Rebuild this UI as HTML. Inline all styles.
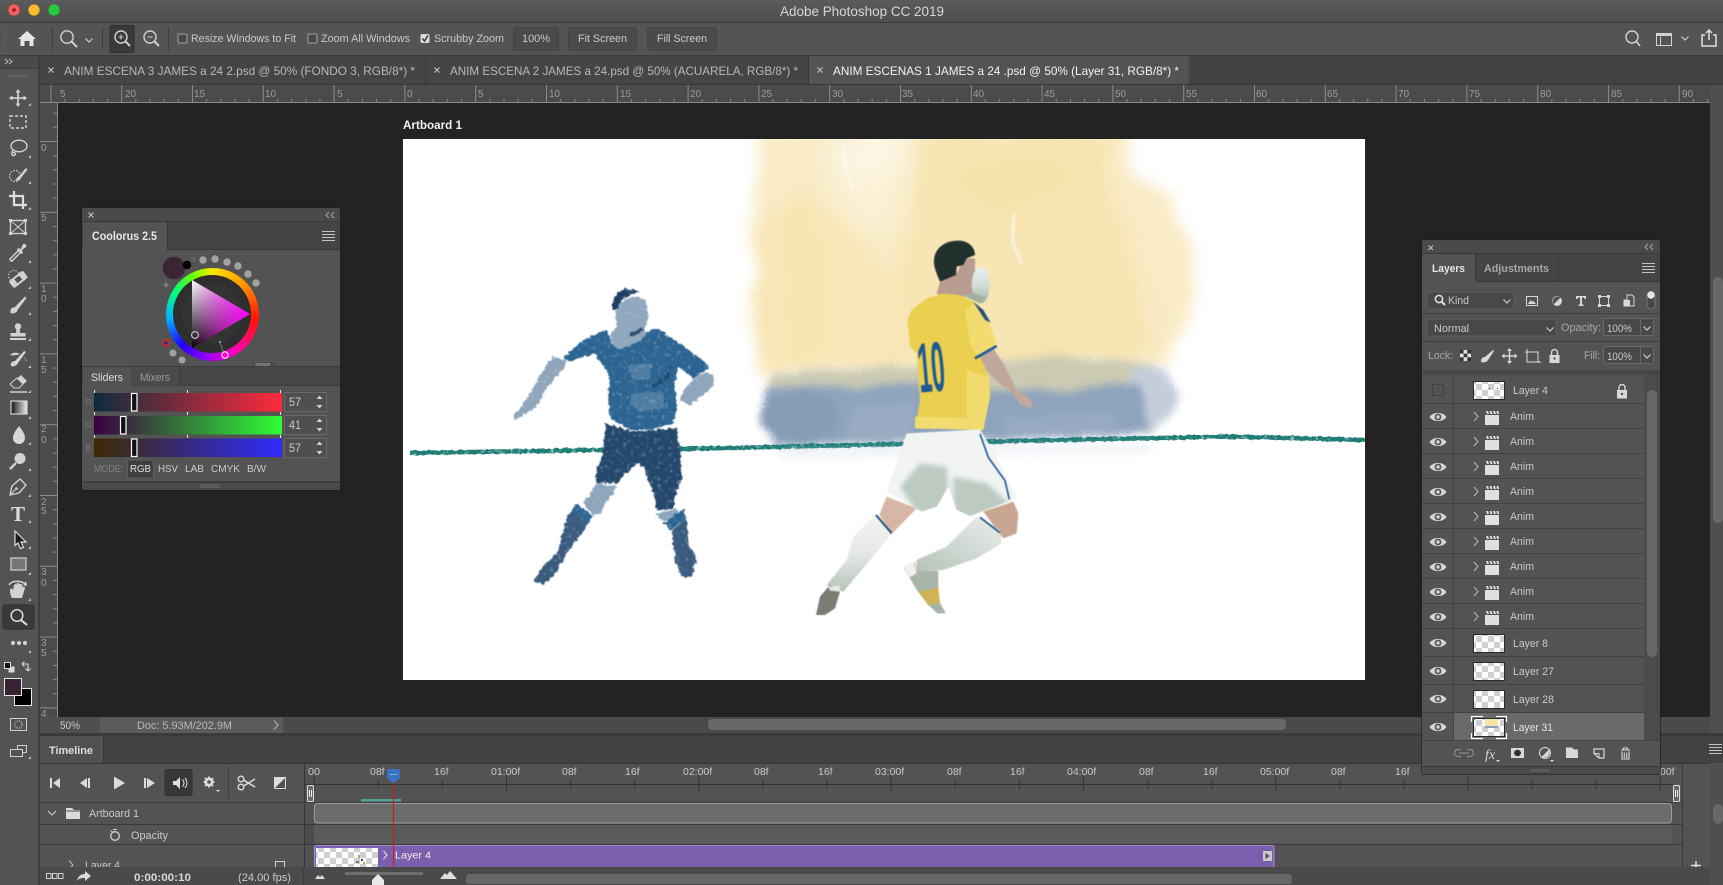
<!DOCTYPE html>
<html><head><meta charset="utf-8"><title>Adobe Photoshop CC 2019</title>
<style>
html,body{margin:0;padding:0;background:#535353;overflow:hidden;width:1723px;height:885px}
svg{display:block;font-family:"Liberation Sans",sans-serif;font-size:11px}
text{fill:#c9c9c9}
.ic{fill:none;stroke:#d2d2d2;stroke-width:1.4}
.f{fill:#d2d2d2;stroke:none}
.ln{stroke:#3d3d3d;stroke-width:1;fill:none}
filter{color-interpolation-filters:sRGB}
</style></head><body>
<svg width="1723" height="885" viewBox="0 0 1723 885" xmlns="http://www.w3.org/2000/svg">
<defs>
<pattern id="chk" patternUnits="userSpaceOnUse" width="12" height="12"><rect width="12" height="12" fill="#fff"/><rect width="6" height="6" fill="#cfcfcf"/><rect x="6" y="6" width="6" height="6" fill="#cfcfcf"/></pattern>
<pattern id="hr" patternUnits="userSpaceOnUse" x="404.4" y="85" width="70.8" height="18"><path d="M.5 0V18M14.66 14V18M28.82 14V18M42.98 14V18M57.14 14V18" stroke="#8a8a8a" stroke-width="1"/></pattern>
<pattern id="vr" patternUnits="userSpaceOnUse" x="40" y="141" width="18" height="70.8"><path d="M0 .5H18M13 14.66H18M13 28.82H18M13 42.98H18M13 57.14H18" stroke="#8a8a8a" stroke-width="1"/></pattern>
<pattern id="tl" patternUnits="userSpaceOnUse" x="313.7" y="777" width="192.3" height="14"><path d="M.5 0V14M64.6 3V12M128.7 3V12" stroke="#333" stroke-width="1"/></pattern>
<linearGradient id="tb" x1="0" y1="0" x2="0" y2="1"><stop offset="0" stop-color="#5b5b5b"/><stop offset="1" stop-color="#4f4f4f"/></linearGradient>
<linearGradient id="gr" x1="0" y1="0" x2="1" y2="0"><stop offset="0" stop-color="#0c2c3d"/><stop offset="1" stop-color="#ff2a3d"/></linearGradient>
<linearGradient id="gg" x1="0" y1="0" x2="1" y2="0"><stop offset="0" stop-color="#3a0040"/><stop offset="1" stop-color="#2eff35"/></linearGradient>
<linearGradient id="gb" x1="0" y1="0" x2="1" y2="0"><stop offset="0" stop-color="#3d2a00"/><stop offset="1" stop-color="#2f2aff"/></linearGradient>
<linearGradient id="tw" gradientUnits="userSpaceOnUse" x1="0" y1="280" x2="0" y2="348"><stop offset="0" stop-color="#fff"/><stop offset="1" stop-color="#000"/></linearGradient>
<linearGradient id="tm" gradientUnits="userSpaceOnUse" x1="250" y1="0" x2="192" y2="0"><stop offset="0" stop-color="#ff00ff"/><stop offset="1" stop-color="#ff00ff" stop-opacity="0"/></linearGradient>
<linearGradient id="tg" x1="0" y1="0" x2="1" y2="0"><stop offset="0" stop-color="#111"/><stop offset="1" stop-color="#eee"/></linearGradient>
<linearGradient id="ballg" x1="0" y1="0" x2="0" y2="1"><stop offset="0" stop-color="#e8f1ef"/><stop offset=".55" stop-color="#cfdad5"/><stop offset="1" stop-color="#9fb0a0"/></linearGradient>
<linearGradient id="sockg" x1="0" y1="0" x2="0" y2="1"><stop offset="0" stop-color="#f3f4f2"/><stop offset=".5" stop-color="#e6e9e6"/><stop offset="1" stop-color="#b5c3ba"/></linearGradient>
<linearGradient id="sock2" x1="1" y1="0" x2="0" y2="1"><stop offset="0" stop-color="#eceeec"/><stop offset="1" stop-color="#b5c3ba"/></linearGradient>
<filter id="wc" filterUnits="userSpaceOnUse" x="403" y="100" width="962" height="480" color-interpolation-filters="sRGB"><feTurbulence type="fractalNoise" baseFrequency=".02" numOctaves="4" seed="4" result="a"/><feDisplacementMap in="SourceGraphic" in2="a" scale="24" xChannelSelector="R" yChannelSelector="G" result="b"/><feGaussianBlur in="b" stdDeviation="7" result="c"/><feTurbulence type="fractalNoise" baseFrequency=".3" numOctaves="2" seed="2" result="d"/><feDisplacementMap in="c" in2="d" scale="6" xChannelSelector="R" yChannelSelector="G"/></filter>
<filter id="wp" filterUnits="userSpaceOnUse" x="403" y="100" width="962" height="480" color-interpolation-filters="sRGB"><feTurbulence type="fractalNoise" baseFrequency=".018" numOctaves="3" seed="11" result="a"/><feDisplacementMap in="SourceGraphic" in2="a" scale="40" xChannelSelector="R" yChannelSelector="G" result="b"/><feGaussianBlur in="b" stdDeviation="14"/></filter>
<filter id="wb" filterUnits="userSpaceOnUse" x="403" y="300" width="962" height="240" color-interpolation-filters="sRGB"><feTurbulence type="fractalNoise" baseFrequency=".03" numOctaves="4" seed="9" result="a"/><feDisplacementMap in="SourceGraphic" in2="a" scale="10" xChannelSelector="R" yChannelSelector="G" result="b"/><feGaussianBlur in="b" stdDeviation="4" result="c"/><feTurbulence type="fractalNoise" baseFrequency=".35" numOctaves="2" seed="6" result="d"/><feDisplacementMap in="c" in2="d" scale="5" xChannelSelector="R" yChannelSelector="G"/></filter>
<filter id="rough" filterUnits="userSpaceOnUse" x="480" y="260" width="260" height="340" color-interpolation-filters="sRGB"><feTurbulence type="fractalNoise" baseFrequency=".26" numOctaves="2" seed="3" result="n"/><feDisplacementMap in="SourceGraphic" in2="n" scale="5" xChannelSelector="R" yChannelSelector="G" result="d"/><feGaussianBlur in="d" stdDeviation=".5" result="d2"/><feColorMatrix in="n" type="matrix" values="0 0 0 0 .75 0 0 0 0 .82 0 0 0 0 .88 0 0 0 1.6 -.92" result="sp"/><feGaussianBlur in="sp" stdDeviation=".4" result="sp2"/><feComposite in="sp2" in2="d2" operator="in" result="s2"/><feMerge><feMergeNode in="d2"/><feMergeNode in="s2"/></feMerge></filter>
<filter id="ln" filterUnits="userSpaceOnUse" x="403" y="420" width="962" height="50" color-interpolation-filters="sRGB"><feTurbulence type="fractalNoise" baseFrequency=".22" numOctaves="2" seed="5" result="n"/><feDisplacementMap in="SourceGraphic" in2="n" scale="3" xChannelSelector="R" yChannelSelector="G" result="d"/><feColorMatrix in="n" type="matrix" values="0 0 0 0 1 0 0 0 0 1 0 0 0 0 1 0 0 0 2 -1.15" result="sp"/><feComposite in="sp" in2="d" operator="in" result="s2"/><feMerge><feMergeNode in="d"/><feMergeNode in="s2"/></feMerge></filter>
<filter id="soft" filterUnits="userSpaceOnUse" x="800" y="230" width="300" height="400" color-interpolation-filters="sRGB"><feGaussianBlur stdDeviation=".45"/></filter>
<filter id="sh" x="-25%" y="-25%" width="150%" height="150%"><feGaussianBlur stdDeviation="7"/></filter>
<filter id="sk" x="-80%" y="-20%" width="260%" height="140%"><feGaussianBlur stdDeviation="4"/></filter>
<filter id="bl6" filterUnits="userSpaceOnUse" x="403" y="400" width="962" height="120"><feGaussianBlur stdDeviation="4"/></filter>
<clipPath id="ab"><rect x="403" y="139" width="962" height="541"/></clipPath>
<clipPath id="tlc"><rect x="40" y="845" width="1670" height="22"/></clipPath>
<clipPath id="shortsc"><path d="M320 610L540 598L590 680L650 805L510 858L470 840L445 770L410 830L365 845L260 785Z"/></clipPath>
<g id="eye"><path d="M-8.5 0C-5 -5.5 5 -5.5 8.5 0C5 5.5 -5 5.5 -8.5 0Z" fill="#d4d4d4"/><circle r="3.4" fill="#535353"/><circle r="1.7" fill="#d4d4d4"/></g>
<g id="clap"><path d="M0 4H14V14H0Z" fill="#e0e0e0"/><path d="M1 0h2l1 3H2ZM4.5 0h2l1 3h-2ZM8 0h2l1 3H9ZM11.5 0h2l.5 3h-2Z" fill="#e0e0e0"/></g>
<g id="chev"><path d="M-2 -4.5L2 0L-2 4.5" fill="none" stroke="#b4b4b4" stroke-width="1.1"/></g>
<g id="ham"><path d="M0 .5H13M0 3.5H13M0 6.5H13M0 9.5H13" stroke="#c4c4c4" stroke-width="1"/></g>
<g id="tri"><path d="M3 0V3H0Z" fill="#bdbdbd"/></g>
<g id="dn"><path d="M-3.5 -1.5L0 2L3.5 -1.5" fill="none" stroke="#cfcfcf" stroke-width="1.2"/></g>
<g id="updn"><path d="M-3 -3L0 -6.5L3 -3ZM-3 3L0 6.5L3 3Z" fill="#d0d0d0"/></g>
</defs>

<!-- base -->
<rect width="1723" height="885" fill="#535353"/>
<rect width="1723" height="22" fill="url(#tb)"/>
<rect y="22" width="1723" height="1" fill="#383838"/>
<circle cx="14" cy="10" r="5.6" fill="#fc5b57"/><circle cx="14" cy="10" r="1.8" fill="#8a1d1a"/>
<circle cx="34" cy="10" r="5.6" fill="#fdbc2e"/><circle cx="54" cy="10" r="5.6" fill="#28c840"/>
<text x="780" y="16" font-size="13.5" textLength="164" lengthAdjust="spacingAndGlyphs" style="fill:#d6d6d6">Adobe Photoshop CC 2019</text>

<!-- options bar -->
<rect y="23" width="1723" height="32" fill="#545454"/><rect y="55" width="1723" height="1" fill="#3c3c3c"/>
<path d="M5 29V50" stroke="#6a6a6a" stroke-dasharray="1 1.5" stroke-width="3" opacity=".6"/>
<path d="M27 31L36 39H33.5V46H29.5V41H24.5V46H20.5V39H18Z" fill="#e6e6e6"/>
<path class="ln" d="M52.5 27V50M102.5 27V50M168.5 27V50"/>
<g transform="translate(68,38)"><circle cx="-1" cy="-1" r="6.2" class="ic"/><path d="M3.5 3.5L9 9" stroke="#d2d2d2" stroke-width="2"/></g>
<use href="#dn" x="89" y="40"/>
<rect x="110" y="25.5" width="24" height="27" rx="2" fill="#3a3a3a" stroke="#2e2e2e"/>
<g transform="translate(122,38)"><circle cx="-1" cy="-1" r="6" class="ic"/><path d="M3.5 3.5L8 8" stroke="#d2d2d2" stroke-width="2"/><path d="M-3.5 -1H1.5M-1 -3.5V1.5" stroke="#d2d2d2"/></g>
<g transform="translate(151,38)"><circle cx="-1" cy="-1" r="6" class="ic"/><path d="M3.5 3.5L8 8" stroke="#d2d2d2" stroke-width="2"/><path d="M-3.5 -1H1.5" stroke="#d2d2d2"/></g>
<rect x="178" y="34" width="9" height="9" rx="1.5" fill="#484848" stroke="#a2a2a2"/>
<text x="191" y="42" textLength="105" lengthAdjust="spacingAndGlyphs">Resize Windows to Fit</text>
<rect x="308" y="34" width="9" height="9" rx="1.5" fill="#484848" stroke="#a2a2a2"/>
<text x="321" y="42" textLength="89" lengthAdjust="spacingAndGlyphs">Zoom All Windows</text>
<rect x="420.5" y="34" width="9" height="9" rx="1.5" fill="#d8d8d8"/><path d="M422.5 38.5L424.5 41L428 35.5" fill="none" stroke="#333" stroke-width="1.4"/>
<text x="434" y="42" textLength="70" lengthAdjust="spacingAndGlyphs">Scrubby Zoom</text>
<rect x="513.5" y="27.5" width="45" height="23" rx="2" fill="#4a4a4a" stroke="#444"/>
<text x="522" y="42" textLength="28" lengthAdjust="spacingAndGlyphs">100%</text>
<rect x="568.5" y="27.5" width="68" height="23" rx="2" fill="#4a4a4a" stroke="#444"/>
<text x="578" y="42" textLength="49" lengthAdjust="spacingAndGlyphs">Fit Screen</text>
<rect x="647.5" y="27.5" width="69" height="23" rx="2" fill="#4a4a4a" stroke="#444"/>
<text x="657" y="42" textLength="50" lengthAdjust="spacingAndGlyphs">Fill Screen</text>
<g transform="translate(1633,38)"><circle cx="-1" cy="-1" r="6" class="ic" stroke-width="1.5"/><path d="M3.5 3.5L7 8" stroke="#d2d2d2" stroke-width="1.6"/></g>
<rect x="1656.5" y="33.5" width="15" height="12" class="ic" style="stroke-width:1"/><rect x="1656.5" y="33.5" width="15" height="2.5" fill="#d2d2d2"/><path d="M1660.5 37V45" stroke="#d2d2d2"/>
<use href="#dn" x="1685" y="38"/>
<path d="M1709 30V40M1706 33L1709 30L1712 33M1705 35H1702V46H1716V35H1713" fill="none" stroke="#e0e0e0" stroke-width="1.5"/>

<!-- tabs -->
<rect x="38" y="56" width="1685" height="28" fill="#424242"/>
<rect x="38" y="56" width="387" height="28" fill="#454545"/><rect x="425" y="56" width="1" height="28" fill="#383838"/>
<rect x="426" y="56" width="382" height="28" fill="#454545"/><rect x="808" y="56" width="1" height="28" fill="#383838"/>
<rect x="809" y="56" width="380" height="28" fill="#535353"/>
<rect x="38" y="84" width="1685" height="1" fill="#383838"/>
<path d="M48.5 67.5L53.5 72.5M53.5 67.5L48.5 72.5M434.5 67.5L439.5 72.5M439.5 67.5L434.5 72.5M817.5 67.5L822.5 72.5M822.5 67.5L817.5 72.5" stroke="#c6c6c6" stroke-width="1.1"/>
<text x="64" y="75" font-size="12" textLength="351" lengthAdjust="spacingAndGlyphs" style="fill:#b8b8b8">ANIM ESCENA 3 JAMES a 24 2.psd @ 50% (FONDO 3, RGB/8*) *</text>
<text x="450" y="75" font-size="12" textLength="348" lengthAdjust="spacingAndGlyphs" style="fill:#b8b8b8">ANIM ESCENA 2 JAMES a 24.psd @ 50% (ACUARELA, RGB/8*) *</text>
<text x="833" y="75" font-size="12" textLength="346" lengthAdjust="spacingAndGlyphs" style="fill:#f2f2f2">ANIM ESCENAS 1 JAMES a 24 .psd @ 50% (Layer 31, RGB/8*) *</text>

<!-- canvas -->
<rect x="58" y="103" width="1652" height="614" fill="#232323"/>
<rect x="1710" y="85" width="13" height="649" fill="#4f4f4f"/>
<rect x="1713" y="277" width="10" height="246" rx="5" fill="#686868"/>

<!-- rulers -->
<rect x="40" y="85" width="1670" height="18" fill="#4b4b4b"/>
<rect x="40" y="85" width="1670" height="18" fill="url(#hr)"/>
<rect x="40" y="103" width="18" height="614" fill="#4b4b4b"/>
<rect x="40" y="103" width="18" height="614" fill="url(#vr)"/>
<rect x="40" y="102" width="1670" height="1" fill="#8a8a8a"/><rect x="57" y="103" width="1" height="614" fill="#8a8a8a"/>
<g font-size="10" style="fill:#9c9c9c">
<text x="60" y="97" style="fill:#9c9c9c">5</text><text x="125" y="97" style="fill:#9c9c9c">20</text><text x="194" y="97" style="fill:#9c9c9c">15</text><text x="265" y="97" style="fill:#9c9c9c">10</text><text x="337" y="97" style="fill:#9c9c9c">5</text><text x="407" y="97" style="fill:#9c9c9c">0</text><text x="478" y="97" style="fill:#9c9c9c">5</text><text x="549" y="97" style="fill:#9c9c9c">10</text><text x="620" y="97" style="fill:#9c9c9c">15</text><text x="690" y="97" style="fill:#9c9c9c">20</text><text x="761" y="97" style="fill:#9c9c9c">25</text><text x="832" y="97" style="fill:#9c9c9c">30</text><text x="902" y="97" style="fill:#9c9c9c">35</text><text x="973" y="97" style="fill:#9c9c9c">40</text><text x="1044" y="97" style="fill:#9c9c9c">45</text><text x="1115" y="97" style="fill:#9c9c9c">50</text><text x="1186" y="97" style="fill:#9c9c9c">55</text><text x="1256" y="97" style="fill:#9c9c9c">60</text><text x="1327" y="97" style="fill:#9c9c9c">65</text><text x="1398" y="97" style="fill:#9c9c9c">70</text><text x="1469" y="97" style="fill:#9c9c9c">75</text><text x="1540" y="97" style="fill:#9c9c9c">80</text><text x="1611" y="97" style="fill:#9c9c9c">85</text><text x="1682" y="97" style="fill:#9c9c9c">90</text>
<text x="41" y="151" style="fill:#9c9c9c">0</text><text x="41" y="221" style="fill:#9c9c9c">5</text><text x="41" y="292" style="fill:#9c9c9c">1</text><text x="41" y="302" style="fill:#9c9c9c">0</text><text x="41" y="363" style="fill:#9c9c9c">1</text><text x="41" y="373" style="fill:#9c9c9c">5</text><text x="41" y="432" style="fill:#9c9c9c">2</text><text x="41" y="443" style="fill:#9c9c9c">0</text><text x="41" y="505" style="fill:#9c9c9c">2</text><text x="41" y="514" style="fill:#9c9c9c">5</text><text x="41" y="575" style="fill:#9c9c9c">3</text><text x="41" y="586" style="fill:#9c9c9c">0</text><text x="41" y="646" style="fill:#9c9c9c">3</text><text x="41" y="656" style="fill:#9c9c9c">5</text><text x="41" y="717" style="fill:#9c9c9c">4</text>
</g>

<!-- artboard -->
<text x="403" y="129" font-size="11.5" font-weight="bold" textLength="59" lengthAdjust="spacingAndGlyphs" style="fill:#f0f0f0">Artboard 1</text>
<rect x="403" y="139" width="962" height="541" fill="#fff"/>
<g clip-path="url(#ab)">
 <g filter="url(#wc)">
  <g transform="translate(730,135) scale(.33333)">
   <path d="M90 -20L1200 -20L1210 140L1335 175L1390 350L1385 500L1300 690L110 720L62 500L80 180Z" fill="#f9ebc6"/>
   <path d="M560 -20L1140 -20L1150 200L1220 300L1250 640L1000 690L500 700L520 300L560 140Z" fill="#f7e6b4"/>
   <path d="M85 300L240 180L400 340L530 420L520 700L110 710L62 500Z" fill="#f8e6b6"/>
   <path d="M170 180L250 170L260 640L190 660Z" fill="#f6e2a8" opacity=".6"/>
  </g>
 </g>
 <g filter="url(#wp)">
  <g transform="translate(730,135) scale(.33333)">
   <path d="M620 30L1080 30L1090 190L950 250L820 290L640 200Z" fill="#f5dfa0" opacity=".4"/>
   <path d="M900 420L1220 440L1240 640L820 660Z" fill="#f5e0a4" opacity=".35"/>
   <path d="M300 60L520 40L510 280L380 300Z" fill="#fdf6e4" opacity=".55"/>
   <path d="M280 -10L540 -10L520 90L300 100Z" fill="#fff" opacity=".55"/>
  </g>
 </g>
 <g transform="translate(730,135) scale(.33333)" filter="url(#sk)">
  <path d="M340 30L345 100L370 160" fill="none" stroke="#fff" stroke-width="8" opacity=".55"/>
  <path d="M852 235L848 320L875 385" fill="none" stroke="#fff" stroke-width="8" opacity=".7"/>
 </g>
 <g filter="url(#wb)">
  <g transform="translate(730,135) scale(.33333)">
   <path d="M120 712L560 695L1000 665L1270 685L1330 760L1335 810L1270 890L1100 900L140 925L100 800Z" fill="#cbcab3"/>
   <path d="M1210 690L1300 700L1340 780L1320 850L1260 890L1180 880Z" fill="#c4cedb"/>
   <path d="M105 760L560 750L1000 770L1230 745L1262 890L1100 905L140 935L100 800Z" fill="#8ea3bd"/>
   <ellipse cx="210" cy="845" rx="120" ry="75" fill="#869cb7"/>
   <path d="M380 810L560 800L540 920L340 925Z" fill="#98abc2"/>
   <path d="M830 845L1150 825L1180 895L820 905Z" fill="#97aac2"/>
  </g>
 </g>
 <path d="M410 453C600 451 660 449 730 448L1060 440L1230 436.500L1365 440" fill="none" stroke="#1f7d76" stroke-width="4.500" filter="url(#ln)"/>
 <path d="M780 455L1150 448" stroke="#dfe7ee" stroke-width="8" opacity=".5" filter="url(#bl6)" fill="none"/>

 <!-- blue player -->
 <g filter="url(#rough)"><g transform="translate(500,270) scale(.33333)">
  <path d="M125 310L155 260L200 270L195 290L135 360L110 410L45 450L40 438L85 380Z" fill="#8ea5bc"/>
  <path d="M590 320L625 305L645 325L630 360L570 405L540 395L550 360Z" fill="#8ea5bc"/>
  <path d="M190 265L250 210L320 180L335 220L360 238L430 190L470 175L540 220L620 280L625 295L580 325L535 290L525 340L530 420L520 460L450 480L390 480L330 445L325 380L330 320L285 250L210 275Z" fill="#2c6492"/>
  <path d="M385 285L455 280L450 325L395 330ZM395 370L490 365L495 415L420 425L390 405Z" fill="#6f95b5" opacity=".5"/>
  <path d="M345 130C350 90 400 70 435 90C450 120 445 160 430 180L440 195L400 225L360 238L335 220L330 195L350 170Z" fill="#90a7bd"/>
  <path d="M385 195L420 175L430 180L400 200Z" fill="#2b4a6a"/>
  <path d="M336 118C335 85 355 60 380 55L420 65L390 75L365 90L350 118Z" fill="#1d3f63"/>
  <path d="M450 348L500 315L515 285L512 318L470 352Z" fill="#1d4a70"/>
  <path d="M290 640L350 650L300 730L280 735L250 700Z" fill="#8ea5bc"/>
  <path d="M315 460L400 485L530 475L540 530L545 620L525 680L520 715L470 720L460 670L430 590L410 580L350 640L290 640L285 620L310 540Z" fill="#24476b"/>
  <path d="M205 730L230 705L275 735L260 770L200 850L160 920L130 945L100 930L130 890L170 850Z" fill="#3a5b7e"/>
  <path d="M215 720L235 705L275 735L265 760Z" fill="#2c6492"/>
  <path d="M468 732L530 715L535 735L490 755Z" fill="#8ea5bc"/>
  <path d="M515 780L560 745L565 820L590 870L575 920L545 920L525 870Z" fill="#3a5b7e"/>
  <path d="M490 760L550 715L560 745L510 780Z" fill="#2c6492"/>
 </g></g>

 <!-- yellow player -->
 <g filter="url(#soft)"><g transform="translate(800,230) scale(.33333)">
  <path d="M535 375L580 355L610 400L650 480L695 510L695 535L660 525L640 490L590 455L560 420Z" fill="#c2a89c"/>
  <path d="M420 155L470 130L480 110L495 85L525 85L525 195L485 200L410 192Z" fill="#b89c90"/>
  <path d="M402 90C405 50 440 30 480 32C510 35 525 55 525 75L500 85L490 105L470 110L468 135L420 155C410 130 400 110 402 90Z" fill="#22302e"/>
  <ellipse cx="542" cy="165" rx="27" ry="55" fill="url(#ballg)"/>
  <path d="M485 195L520 190L560 205L530 215Z" fill="#a0b09e"/>
  <path d="M335 240L380 205L430 190L480 195L520 215L565 275L590 345L535 370L565 440L570 500L550 600L345 595L360 510L350 370L330 350L322 270Z" fill="#ebcf4e"/>
  <path d="M495 240L520 220L565 270L590 345L530 375L510 340ZM500 420L568 440L570 500L550 600L500 598ZM345 560L550 565L550 600L345 595Z" fill="#f3dc6f"/>
  <path d="M520 215L550 240L572 278L555 270Z" fill="#2a4f78"/>
  <path d="M525 385L590 348" stroke="#1c5a96" stroke-width="8" fill="none"/>
  <text transform="translate(360,488) rotate(-5) scale(.34,1)" font-size="212" font-weight="bold" style="fill:#1f5a96">10</text>
  <path d="M320 610L540 598L590 680L650 805L510 858L470 840L445 770L410 830L365 845L260 785Z" fill="#f2f4f2"/>
  <g clip-path="url(#shortsc)"><path d="M300 770L360 700L440 710L445 770L420 860L360 860ZM460 740L560 760L640 830L510 880L460 850Z" fill="#bccac2" filter="url(#sh)"/></g>
  <path d="M540 612L565 682L615 752L628 808" fill="none" stroke="#1f5a96" stroke-width="5"/>
  <path d="M260 800L350 835L275 912L238 855Z" fill="#d8b6a6"/>
  <path d="M225 855L275 910L215 985L130 1085L80 1065L140 990L160 920Z" fill="url(#sockg)"/>
  <path d="M228 855L275 910" stroke="#1c4f86" stroke-width="6" fill="none"/>
  <path d="M90 1065L120 1085L105 1135L75 1155L48 1155L60 1100Z" fill="#7a7d72"/>
  <path d="M85 1070L120 1066L118 1085L90 1082Z" fill="#e8e8e4"/>
  <path d="M550 845L640 815L655 850L650 910L610 925Z" fill="#c9a691"/>
  <path d="M350 990L440 950L530 860L600 900L605 940L530 985L430 1020L350 1022Z" fill="url(#sock2)"/>
  <path d="M540 862L600 908" stroke="#1c4f86" stroke-width="5" fill="none"/>
  <path d="M310 1012L345 996L350 1022L415 1022L415 1075L355 1088Z" fill="#a9b5a9"/>
  <path d="M312 1012L342 998L350 1030L328 1042Z" fill="#f1f1ef"/>
  <path d="M355 1086L415 1072L420 1118L385 1126Z" fill="#d0b354"/>
  <path d="M385 1125L420 1118L437 1150L412 1150Z" fill="#a5b3a8"/>
 </g></g>
</g>

<!-- left toolbar -->
<rect x="0" y="56" width="38" height="829" fill="#535353"/>
<rect x="38" y="56" width="2" height="829" fill="#3d3d3d"/>
<rect x="0" y="56" width="38" height="12" fill="#4a4a4a"/><rect x="0" y="68" width="38" height="1" fill="#404040"/>
<path d="M5 59L8 61.5L5 64M9 59L12 61.5L9 64" fill="none" stroke="#bdbdbd"/>
<path d="M9 74.5V77M11 74.5V77M13 74.5V77M15 74.5V77M17 74.5V77M19 74.5V77M21 74.5V77M23 74.5V77M25 74.5V77M27 74.5V77" stroke="#6d6d6d"/>
<!-- tools -->
<g transform="translate(18,98)"><path d="M0 -8V8M-8 0H8" stroke="#dcdcdc" stroke-width="1.6"/><path d="M-2.5 -5.5L0 -9L2.5 -5.5ZM-2.5 5.5L0 9L2.5 5.5ZM-5.5 -2.5L-9 0L-5.5 2.5ZM5.5 -2.5L9 0L5.5 2.5Z" class="f"/></g>
<rect x="10" y="116" width="16" height="12" fill="none" stroke="#d6d6d6" stroke-width="1.4" stroke-dasharray="3 2"/>
<g transform="translate(18,148)"><ellipse cx="1" cy="-2" rx="8" ry="5.8" class="ic"/><path d="M-5 2.5C-8 6 -5 9 -3 7C-2 5.5 -3.5 4 -5 5" class="ic"/></g>
<g transform="translate(18,175)"><circle cx="-3" cy="1" r="5.5" fill="none" stroke="#d2d2d2" stroke-width="1.2" stroke-dasharray="1.5 1.5"/><path d="M1 1L8 -7L9.5 -5.5L3 3C2 6 -1 6 -3 5Z" class="f"/></g>
<g transform="translate(18,200)"><path d="M-4 -9V5H9M-9 -4H5V9" fill="none" stroke="#dedede" stroke-width="2.2"/></g>
<g transform="translate(18,227)"><rect x="-7.5" y="-6.5" width="15" height="13" class="ic"/><path d="M-7.5 -6.5L7.5 6.5M7.5 -6.5L-7.5 6.5" stroke="#d2d2d2"/><rect x="-9" y="-8" width="3" height="3" class="f"/><rect x="6" y="-8" width="3" height="3" class="f"/><rect x="-9" y="5" width="3" height="3" class="f"/><rect x="6" y="5" width="3" height="3" class="f"/></g>
<g transform="translate(18,253)"><path d="M-7 8L-8 6L1 -3L3 -1L-6 8Z" class="ic"/><path d="M0 -5L3 -4L5 -9C7 -10 9 -8 8 -6L4 -3L5 0L3 1L-1 -3Z" class="f"/></g>
<g transform="translate(18,279)"><circle cx="-4" cy="-3" r="5.5" fill="none" stroke="#d2d2d2" stroke-dasharray="1.5 1.5"/><rect x="-9" y="-4" width="18" height="9" rx="2" class="f" transform="rotate(-38)"/><rect x="-3" y="-2" width="6" height="5" fill="#535353" transform="rotate(-38)"/></g>
<g transform="translate(18,305)"><path d="M-7.5 8C-8 4 -6 2 -3.5 2.5L7 -8.5L8.5 -7L-0.5 5C-1 8 -5 9 -7.5 8Z" class="f"/></g>
<g transform="translate(18,332)"><circle cy="-5.5" r="3.2" class="f"/><rect x="-1.8" y="-4" width="3.6" height="6" class="f"/><rect x="-7.5" y="1" width="15" height="3.5" class="f"/><rect x="-8" y="6" width="16" height="2" class="f"/></g>
<g transform="translate(18,358)"><path d="M-7 8C-8 5 -6 3 -3 3L6 -7L8 -6L0 5C-1 8 -5 9 -7 8Z" class="f"/><path d="M-8 -3C-5 -6 -2 -6 2 -4C-1 -3 -4 -2 -8 -3Z" class="f"/><path d="M6 0L9 3" stroke="#d2d2d2" stroke-dasharray="1 1.5"/></g>
<g transform="translate(18,384)"><path d="M-3 -4L3 -9L9 -3L1 4H-4L-8 0Z" class="f"/><path d="M-8 0L-4 4H1L5 0L-1 -6Z" fill="#535353" stroke="#d2d2d2"/><path d="M-8 8H9" stroke="#d2d2d2" stroke-width="1.4"/></g>
<rect x="11" y="401" width="16" height="13" fill="url(#tg)" stroke="#d4d4d4" stroke-width="1.2"/>
<path d="M19 426C22 430 25 434 25 438A6 6 0 0 1 13 438C13 434 16 430 19 426Z" fill="#d8d8d8"/>
<g transform="translate(18,461)"><circle cx="2" cy="-2.5" r="5.5" class="f"/><path d="M-2 2L-8 8" stroke="#d2d2d2" stroke-width="2.4"/></g>
<g transform="translate(18,487)"><path d="M-8 8L-6 -1L2 -8L8 -2L1 6Z" class="ic"/><path d="M-8 8L-2 2" stroke="#d2d2d2"/><circle cx="-1.5" cy="1.5" r="1.3" class="f"/></g>
<text x="11" y="521" font-weight="bold" font-size="21" style="font-family:'Liberation Serif',serif;fill:#dcdcdc">T</text>
<path d="M15 531L26 542L21 542L23.5 547.5L20.5 548.5L18 543L15 545.5Z" fill="#1e1e1e" stroke="#dcdcdc" stroke-width="1.2"/>
<rect x="11" y="558" width="15" height="12" fill="#757575" stroke="#cfcfcf" stroke-width="1.2"/>
<g transform="translate(18,590)"><path d="M-6 8C-8 4 -8 2 -8 0C-8 -2 -6 -2 -5 0L-4 -5C-3 -7 -2 -6 -2 -5L-1 -7C0 -8 1 -7 1 -6L2 -6C3 -7 4 -6 4 -5L5 -3C6 -4 7 -3 7 -2L4 8Z" class="f"/><path d="M-9 -5C-6 -10 4 -10 8 -5" class="ic"/><path d="M8 -9L9 -4L5 -5Z" class="f"/></g>
<rect x="3" y="605" width="31" height="24" rx="2" fill="#3a3a3a" stroke="#2d2d2d"/>
<g transform="translate(18,617)"><circle cx="-1" cy="-1.5" r="5.8" fill="none" stroke="#e2e2e2" stroke-width="1.4"/><path d="M3 3L9 8" stroke="#e2e2e2" stroke-width="2"/></g>
<circle cx="13" cy="643" r="2.1" class="f"/><circle cx="19" cy="643" r="2.1" class="f"/><circle cx="25" cy="643" r="2.1" class="f"/>
<!-- tri marks -->
<use href="#tri" x="28" y="103"/><use href="#tri" x="28" y="155"/><use href="#tri" x="28" y="181"/><use href="#tri" x="28" y="207"/><use href="#tri" x="28" y="260"/><use href="#tri" x="28" y="286"/><use href="#tri" x="28" y="312"/><use href="#tri" x="28" y="338"/><use href="#tri" x="28" y="365"/><use href="#tri" x="28" y="390"/><use href="#tri" x="28" y="416"/><use href="#tri" x="28" y="442"/><use href="#tri" x="28" y="468"/><use href="#tri" x="28" y="494"/><use href="#tri" x="28" y="520"/><use href="#tri" x="28" y="546"/><use href="#tri" x="28" y="572"/><use href="#tri" x="28" y="598"/><use href="#tri" x="28" y="650"/><use href="#tri" x="28" y="756"/>
<rect x="8.5" y="666.5" width="6" height="6" fill="#d8d8d8"/><rect x="4.5" y="662.5" width="6" height="6" fill="#111" stroke="#d8d8d8"/>
<path d="M22 664H28V671M22 664L24.5 661.5M22 664L24.5 666.5M28 671L25.5 668.5M28 671L30.5 668.5" fill="none" stroke="#d8d8d8" stroke-width="1.1"/>
<rect x="14.5" y="688.5" width="17" height="17" fill="#000" stroke="#e6e6e6"/>
<rect x="4.5" y="678.5" width="17" height="17" fill="#3a2235" stroke="#e6e6e6"/>
<rect x="10.5" y="718.5" width="16" height="12" fill="none" stroke="#cfcfcf"/><circle cx="18.5" cy="724.5" r="3.7" fill="none" stroke="#cfcfcf" stroke-dasharray="1 1"/>
<rect x="17.5" y="745.5" width="9" height="7" fill="#535353" stroke="#cfcfcf"/><rect x="10.5" y="749.5" width="12" height="7" fill="#535353" stroke="#cfcfcf"/>

<!-- status bar -->
<rect x="40" y="717" width="1670" height="17" fill="#4a4a4a"/>
<rect x="40" y="717" width="60" height="16" fill="#4f4f4f"/>
<rect x="100" y="717" width="183" height="16" fill="#5b5b5b"/>
<text x="60" y="729" textLength="20" lengthAdjust="spacingAndGlyphs" font-size="11">50%</text>
<text x="137" y="729" textLength="95" lengthAdjust="spacingAndGlyphs" font-size="11" style="fill:#b8b8b8">Doc: 5.93M/202.9M</text>
<use href="#chev" x="276" y="725"/>
<rect x="708" y="719" width="578" height="11" rx="4" fill="#686868"/>
<rect x="40" y="733" width="1683" height="3" fill="#3a3a3a"/>

<!-- timeline -->
<rect x="40" y="736" width="1683" height="27" fill="#424242"/>
<rect x="40" y="736" width="63" height="27" fill="#505050"/><rect x="103" y="736" width="1" height="27" fill="#363636"/>
<text x="49" y="754" font-weight="bold" font-size="11" textLength="44" lengthAdjust="spacingAndGlyphs" style="fill:#dedede">Timeline</text>
<use href="#ham" x="1709" y="744"/>
<rect x="40" y="763" width="1670" height="1" fill="#363636"/>
<rect x="40" y="764" width="1670" height="103" fill="#535353"/>
<!-- controls -->
<g fill="#dcdcdc"><rect x="50" y="778" width="2" height="10"/><path d="M60 778V788L53 783Z"/><path d="M87 778V788L80 783Z"/><rect x="88" y="778" width="2" height="10"/><path d="M114 778V791L125 784.5Z" transform="translate(0,-1.5)"/><rect x="144" y="778" width="2" height="10"/><path d="M147 778V788L155 783Z"/></g>
<rect x="165" y="769.5" width="27" height="26" rx="2" fill="#373737" stroke="#2f2f2f"/>
<path d="M173 781H176L180 777V789L176 785H173Z" fill="#dcdcdc"/><path d="M182.5 779.5C184.5 781.5 184.5 784.5 182.5 786.5M185 778C187.5 781 187.5 785 185 788" fill="none" stroke="#dcdcdc"/>
<g transform="translate(209,782)"><circle r="3.3" fill="none" stroke="#dcdcdc" stroke-width="2.4"/><path d="M0 -5.5V5.5M-5.5 0H5.5M-4 -4L4 4M4 -4L-4 4" stroke="#dcdcdc" stroke-width="1.8"/><circle r="1.8" fill="#535353"/></g>
<path d="M216 790H220L218 792Z" fill="#dcdcdc"/>
<path d="M228.5 767V798" stroke="#3d3d3d"/>
<g transform="translate(247,783)"><circle cx="-6" cy="-4" r="2.8" fill="none" stroke="#dcdcdc" stroke-width="1.4"/><circle cx="-6" cy="4" r="2.8" fill="none" stroke="#dcdcdc" stroke-width="1.4"/><path d="M-3.5 -3L8 4M-3.5 3L8 -4" stroke="#dcdcdc" stroke-width="1.6"/></g>
<rect x="274.5" y="777.5" width="11" height="11" fill="#535353" stroke="#dcdcdc"/><path d="M274 789L286 777H274Z" fill="#dcdcdc"/>
<rect x="304" y="764" width="1" height="103" fill="#363636"/>
<rect x="40" y="802" width="1642" height="1" fill="#3a3a3a"/><rect x="40" y="824" width="1642" height="1" fill="#3a3a3a"/><rect x="40" y="844" width="1642" height="1" fill="#3a3a3a"/>
<rect x="1682" y="764" width="1" height="103" fill="#3a3a3a"/>
<!-- timeline left rows -->
<path d="M48 811L52 815L56 811" fill="none" stroke="#cfcfcf" stroke-width="1.1"/>
<path d="M66 808H72L74 810H80V819H66Z" fill="#dadada"/><path d="M66 811H80" stroke="#535353"/>
<text x="89" y="817" textLength="50" lengthAdjust="spacingAndGlyphs">Artboard 1</text>
<circle cx="115" cy="836" r="4.3" fill="none" stroke="#d2d2d2" stroke-width="1.3"/><path d="M113 829.5H117M110.5 830.5L112.5 832" stroke="#d2d2d2"/>
<text x="131" y="839" textLength="37" lengthAdjust="spacingAndGlyphs">Opacity</text>
<g clip-path="url(#tlc)">
<use href="#chev" x="71" y="865"/>
<text x="85" y="869" textLength="35" lengthAdjust="spacingAndGlyphs">Layer 4</text>
<rect x="275.5" y="861.5" width="9" height="7" fill="none" stroke="#cfcfcf"/>
</g>
<!-- timeline ruler -->
<rect x="305" y="784" width="1368" height="1" fill="#333"/>
<rect x="305" y="777" width="1368" height="14" fill="url(#tl)"/>
<g font-size="10.5">
<text x="308" y="775" textLength="12" lengthAdjust="spacingAndGlyphs">00</text><text x="370" y="775">08f</text>
<text x="434" y="775">16f</text><text x="491" y="775">01:00f</text><text x="562" y="775">08f</text><text x="625" y="775">16f</text><text x="683" y="775">02:00f</text><text x="754" y="775">08f</text><text x="818" y="775">16f</text><text x="875" y="775">03:00f</text><text x="947" y="775">08f</text><text x="1010" y="775">16f</text><text x="1067" y="775">04:00f</text><text x="1139" y="775">08f</text><text x="1203" y="775">16f</text><text x="1260" y="775">05:00f</text><text x="1331" y="775">08f</text><text x="1395" y="775">16f</text><text x="1660" y="775">00f</text>
</g>
<rect x="361" y="799" width="40" height="2.5" fill="#55a39b"/>
<rect x="307.5" y="785.5" width="6" height="16" rx="1" fill="#686868" stroke="#dcdcdc"/><path d="M309.5 790V797M311.5 790V797" stroke="#eee"/>
<rect x="1673.5" y="785.5" width="6" height="16" rx="1" fill="#686868" stroke="#dcdcdc"/><path d="M1675.5 790V797M1677.5 790V797" stroke="#eee"/>
<!-- tracks -->
<rect x="305" y="825" width="9" height="19" fill="#4c4c4c"/><rect x="314" y="825" width="1358" height="19" fill="#5a5a5a"/>
<rect x="314.5" y="803.5" width="1357" height="19.5" rx="3" fill="#6b6b6b" stroke="#9c9c9c"/>
<rect x="314" y="845.5" width="960" height="22" fill="#7c5fac"/>
<path d="M314.5 867V848Q314.5 845.5 317 845.5H1272Q1274 845.5 1274 848V867" fill="none" stroke="#a48cd0"/>
<rect x="316" y="848" width="62" height="19" fill="url(#chk)"/>
<g fill="#b9a15c"><rect x="358" y="855" width="2" height="3"/><rect x="361" y="859" width="2" height="2" fill="#345"/><rect x="356" y="861" width="3" height="2" fill="#777"/><rect x="363" y="862" width="2" height="2"/></g>
<path d="M383.5 851L387 855L383.5 859" fill="none" stroke="#e8e0f2" stroke-width="1.1"/>
<text x="395" y="858.5" textLength="36" lengthAdjust="spacingAndGlyphs" font-size="10.5" style="fill:#eee">Layer 4</text>
<rect x="1263" y="851" width="9" height="10" fill="#c9c9c9"/><path d="M1265.5 853V859L1270 856Z" fill="#555"/>
<!-- playhead -->
<path d="M393.5 783V867" stroke="#c21f1f" stroke-width="1.2"/>
<path d="M387 771Q387 769 389 769H398Q400 769 400 771V778L393.5 783.5L387 778Z" fill="#3a72c8"/>
<path d="M390.5 774.5H391.5M393 774.5H394M395.5 774.5H396.5" stroke="#fff"/>
<!-- right column -->
<rect x="1710" y="764" width="13" height="121" fill="#4f4f4f"/><rect x="1713" y="804" width="10" height="20" rx="5" fill="#686868"/>
<path d="M1696 861V867M1691 865.5H1701" stroke="#e0e0e0" stroke-width="1.6"/>
<!-- bottom bar -->
<rect x="40" y="867" width="1670" height="18" fill="#4a4a4a"/>
<rect x="303" y="867" width="1" height="18" fill="#3a3a3a"/>
<rect x="46.5" y="873.5" width="4.5" height="5" fill="none" stroke="#cfcfcf"/><rect x="52.5" y="873.5" width="4.5" height="5" fill="none" stroke="#cfcfcf"/><rect x="58.5" y="873.5" width="4.5" height="5" fill="none" stroke="#cfcfcf"/>
<path d="M77 881C78 876 81 874 85 874V871L91 876L85 881V878C82 878 79 878 77 881Z" fill="#d8d8d8"/>
<text x="134" y="881" font-weight="bold" font-size="11" textLength="57" lengthAdjust="spacingAndGlyphs" style="fill:#d8d8d8">0:00:00:10</text>
<text x="238" y="881" font-size="11" textLength="53" lengthAdjust="spacingAndGlyphs">(24.00 fps)</text>
<path d="M315 879H325L322 875L320 877L318 875Z" fill="#d8d8d8"/>
<rect x="345" y="872" width="78" height="3" fill="#6e6e6e"/>
<path d="M378 874L384 880V885H372V880Z" fill="#e8e8e8"/>
<path d="M440 879L445 873L447 875L450 871L457 879Z" fill="#e0e0e0"/>
<rect x="466" y="874" width="826" height="10" rx="3" fill="#676767"/>

<!-- Coolorus panel -->
<g>
<rect x="81" y="207" width="260" height="284" rx="3" fill="#1a1a1a" opacity=".6"/>
<rect x="82" y="208" width="258" height="282" rx="2" fill="#535353"/>
<rect x="82" y="208" width="258" height="14" rx="2" fill="#4a4a4a"/><rect x="82" y="221" width="258" height="1" fill="#383838"/>
<path d="M88.5 212.5L93.5 217.5M93.5 212.5L88.5 217.5" stroke="#c6c6c6"/>
<path d="M329 212L326 215L329 218M334 212L331 215L334 218" fill="none" stroke="#aaa" stroke-width=".9"/>
<rect x="82" y="222" width="258" height="28" fill="#454545"/>
<rect x="83" y="222" width="84" height="29" fill="#535353"/><rect x="167" y="222" width="1" height="28" fill="#383838"/><rect x="168" y="249" width="172" height="1" fill="#383838"/>
<text x="92" y="240" font-weight="bold" font-size="11.5" textLength="65" lengthAdjust="spacingAndGlyphs" style="fill:#e6e6e6">Coolorus 2.5</text>
<use href="#ham" x="322" y="231"/>
<foreignObject x="165" y="267" width="94" height="94"><div xmlns="http://www.w3.org/1999/xhtml" style="width:93px;height:93px;margin:.5px;border-radius:50%;background:conic-gradient(#ffe600 0deg,#ff8c00 50deg,#ff1500 95deg,#ff00c0 150deg,#9000ff 190deg,#2000ff 225deg,#00b4ff 265deg,#00ff80 300deg,#70ff00 335deg,#ffe600 360deg)"></div></foreignObject>
<circle cx="212" cy="314" r="39" fill="#2e2e2e"/>
<circle cx="212" cy="314" r="30" fill="#333"/>
<polygon points="192,280 250,314 192,348" fill="url(#tw)"/>
<polygon points="192,280 250,314 192,348" fill="url(#tm)"/>
<circle cx="195" cy="335" r="3.4" fill="none" stroke="#ddd" stroke-width="1"/>
<path d="M220 342L224 354" stroke="#888" stroke-width=".8"/><circle cx="220" cy="342" r="1" fill="#aaa"/>
<circle cx="225" cy="355" r="3.2" fill="#ff00c0" stroke="#fff" stroke-width="1"/>
<circle cx="174" cy="268" r="11.5" fill="#3a2535" stroke="#4a4a4a"/>
<circle cx="187" cy="265" r="4.2" fill="#000"/>
<g fill="#a2a2a2"><circle cx="203" cy="260" r="3.7"/><circle cx="215" cy="259" r="3.7"/><circle cx="227" cy="262" r="3.7"/><circle cx="238" cy="266" r="3.7"/><circle cx="248" cy="274" r="3.7"/><circle cx="256" cy="283" r="3.7"/><circle cx="173" cy="353" r="3.5"/><circle cx="182" cy="360" r="3.5"/></g>
<path d="M191 258H194V262" fill="none" stroke="#888" stroke-width=".8"/>
<circle cx="166" cy="285" r="1.8" fill="#8a8a8a"/><path d="M166 281V289M162 285H170" stroke="#777" stroke-width=".7"/>
<circle cx="166" cy="343" r="3" fill="none" stroke="#d3291f" stroke-width="2"/><circle cx="166" cy="343" r="1.7" fill="#1a2aa5"/>
<rect x="253" y="362" width="21" height="4" fill="#4b4b4b"/>
<text x="255" y="366" font-size="4.5" style="fill:#bbb">392939</text>
<rect x="82" y="366" width="258" height="20" fill="#474747"/>
<rect x="83" y="366" width="48" height="20" fill="#535353"/><rect x="131" y="366" width="48" height="19" fill="#4b4b4b"/><rect x="179" y="366" width="1" height="19" fill="#3c3c3c"/><rect x="180" y="385" width="160" height="1" fill="#3c3c3c"/><rect x="82" y="366" width="258" height="1" fill="#3c3c3c"/>
<text x="91" y="381" font-size="11" textLength="32" lengthAdjust="spacingAndGlyphs" style="fill:#dcdcdc">Sliders</text>
<text x="140" y="381" font-size="11" textLength="30" lengthAdjust="spacingAndGlyphs" style="fill:#9a9a9a">Mixers</text>
<path d="M94.5 390V393M187.5 390V393M280.5 390V393M94.5 412V415M187.5 412V415M280.5 412V415M94.5 435V438M187.5 435V438M280.5 435V438" stroke="#e8e8e8"/>
<rect x="94" y="393" width="188" height="18.5" fill="url(#gr)"/><rect x="94" y="416" width="188" height="18.5" fill="url(#gg)"/><rect x="94" y="438.5" width="188" height="18.5" fill="url(#gb)"/>
<g stroke="#fff" stroke-width="1.2" fill="#111"><rect x="131.5" y="393.5" width="5.5" height="17.5"/><rect x="120.5" y="416.5" width="5.5" height="17.5"/><rect x="131.5" y="439" width="5.500" height="17.5"/></g>
<g font-size="8.5"><text x="85.5" y="405" style="fill:#7a7a7a">R</text><text x="85" y="428" style="fill:#7a7a7a">G</text><text x="85.5" y="451" style="fill:#7a7a7a">B</text></g>
<rect x="284.5" y="392.5" width="42" height="19" fill="#4f4f4f" stroke="#696969"/><rect x="284.5" y="415.5" width="42" height="19" fill="#4f4f4f" stroke="#696969"/><rect x="284.5" y="438.5" width="42" height="19" fill="#4f4f4f" stroke="#696969"/>
<g font-size="11.5"><text x="289" y="406" textLength="12" lengthAdjust="spacingAndGlyphs">57</text><text x="289" y="429" textLength="12" lengthAdjust="spacingAndGlyphs">41</text><text x="289" y="452" textLength="12" lengthAdjust="spacingAndGlyphs">57</text></g>
<use href="#updn" x="319.5" y="402"/><use href="#updn" x="319.5" y="425"/><use href="#updn" x="319.5" y="448"/>
<rect x="127.5" y="460" width="26" height="18" rx="1" fill="#3f3f3f" stroke="#5e5e5e"/>
<g font-size="10.5"><text x="94" y="472" textLength="29" lengthAdjust="spacingAndGlyphs" style="fill:#808080">MODE:</text><text x="130" y="472" textLength="21" lengthAdjust="spacingAndGlyphs" style="fill:#e0e0e0">RGB</text><text x="158" y="472" textLength="20" lengthAdjust="spacingAndGlyphs">HSV</text><text x="185" y="472" textLength="19" lengthAdjust="spacingAndGlyphs">LAB</text><text x="211" y="472" textLength="29" lengthAdjust="spacingAndGlyphs">CMYK</text><text x="247" y="472" textLength="19" lengthAdjust="spacingAndGlyphs">B/W</text></g>
<rect x="83" y="481" width="257" height="2" fill="#3e3e3e"/><rect x="83" y="483" width="257" height="7" fill="#4a4a4a"/>
<path d="M201 484V488M203 484V488M205 484V488M207 484V488M209 484V488M211 484V488M213 484V488M215 484V488M217 484V488M219 484V488" stroke="#6a6a6a"/>
</g>

<!-- Layers panel -->
<g>
<rect x="1421" y="239" width="240" height="536" rx="3" fill="#1a1a1a" opacity=".6"/>
<rect x="1422" y="240" width="238" height="534" rx="2" fill="#535353"/>
<rect x="1422" y="240" width="238" height="13" rx="2" fill="#4a4a4a"/><rect x="1422" y="253" width="238" height="1" fill="#383838"/>
<path d="M1428.5 245.5L1433 250M1433 245.5L1428.5 250" stroke="#c6c6c6"/>
<path d="M1648 244L1645 247L1648 250M1653 244L1650 247L1653 250" fill="none" stroke="#aaa" stroke-width=".9"/>
<rect x="1423" y="254" width="237" height="27" fill="#454545"/>
<rect x="1423" y="254" width="52" height="28" fill="#535353"/><rect x="1475" y="254" width="1" height="27" fill="#383838"/>
<rect x="1558" y="254" width="1" height="27" fill="#383838"/><rect x="1476" y="281" width="184" height="1" fill="#383838"/>
<text x="1432" y="272" font-weight="bold" font-size="11" textLength="33" lengthAdjust="spacingAndGlyphs" style="fill:#e6e6e6">Layers</text>
<text x="1484" y="272" font-size="11" font-weight="bold" textLength="65" lengthAdjust="spacingAndGlyphs" style="fill:#a8a8a8">Adjustments</text>
<use href="#ham" x="1642" y="263"/>
<!-- filter row -->
<rect x="1427" y="292" width="87" height="17" rx="2" fill="#484848" stroke="#5c5c5c"/>
<circle cx="1439" cy="299" r="3.6" fill="none" stroke="#e0e0e0" stroke-width="1.5"/><path d="M1442 302L1445 305" stroke="#e0e0e0" stroke-width="2"/>
<text x="1448" y="304" textLength="21" lengthAdjust="spacingAndGlyphs">Kind</text><use href="#dn" x="1507" y="301"/>
<rect x="1526.5" y="296.5" width="11" height="9" fill="none" stroke="#d8d8d8"/><path d="M1528 304L1530.5 300L1532 302L1533 300.5L1536 304Z" fill="#d8d8d8"/>
<circle cx="1557" cy="301" r="5" fill="#d8d8d8"/><path d="M1553.500 304.500A5 5 0 0 1 1560.500 297.500Z" fill="#535353"/>
<path d="M1576 296H1586V299H1584.500L1584 297.500H1582V304.500H1583.500V306H1578.500V304.500H1580V297.500H1578L1577.500 299H1576Z" fill="#d8d8d8"/>
<rect x="1599.5" y="296.5" width="9" height="9" fill="none" stroke="#d8d8d8"/><path d="M1598 295h3v3h-3ZM1607 295h3v3h-3ZM1598 304h3v3h-3ZM1607 304h3v3h-3Z" fill="#d8d8d8" stroke="none"/>
<path d="M1627 295H1632L1634 297V306H1624V300H1627Z" fill="none" stroke="#d8d8d8"/><rect x="1624" y="300" width="6" height="6" fill="#d8d8d8"/>
<rect x="1647" y="292" width="8" height="17" rx="4" fill="#464646" stroke="#777"/><circle cx="1651" cy="295" r="3.7" fill="#e6e6e6"/>
<rect x="1423" y="313" width="237" height="1" fill="#3e3e3e"/>
<!-- blend -->
<rect x="1427" y="319" width="129" height="17" rx="2" fill="#484848" stroke="#5c5c5c"/>
<text x="1434" y="332" textLength="35" lengthAdjust="spacingAndGlyphs">Normal</text><use href="#dn" x="1550" y="329"/>
<text x="1561" y="331" textLength="40" lengthAdjust="spacingAndGlyphs" style="fill:#a8a8a8">Opacity:</text>
<rect x="1603.5" y="318.5" width="50" height="17" rx="2" fill="#484848" stroke="#6a6a6a"/><path d="M1640.5 319V335" stroke="#6a6a6a"/>
<text x="1607" y="332" textLength="25" lengthAdjust="spacingAndGlyphs">100%</text><use href="#dn" x="1647" y="328"/>
<rect x="1423" y="341" width="237" height="1" fill="#3e3e3e"/>
<!-- lock -->
<text x="1428" y="359" textLength="25" lengthAdjust="spacingAndGlyphs" style="fill:#a8a8a8">Lock:</text>
<rect x="1460" y="350" width="11" height="11" fill="#e0e0e0"/><path d="M1460 350h3.600v3.600h-3.600ZM1467.300 350h3.700v3.600h-3.700ZM1463.600 353.600h3.700v3.700h-3.700ZM1460 357.300h3.600v3.700h-3.600ZM1467.300 357.300h3.700v3.700h-3.700Z" fill="#333"/>
<path d="M1481 362C1481 358 1483 357 1485 357L1493 350L1494 351L1488 360C1487 362 1484 363 1481 362Z" fill="#d8d8d8"/>
<path d="M1509.500 349V363M1502.500 356H1516.500" stroke="#d8d8d8" stroke-width="1.400"/><path d="M1507 351L1509.500 348L1512 351ZM1507 361L1509.500 364L1512 361ZM1504.500 353.500L1501.500 356L1504.500 358.500ZM1514.500 353.500L1517.500 356L1514.500 358.500Z" fill="#d8d8d8"/>
<path d="M1525 352H1538V363M1527 349V362H1541" fill="none" stroke="#d8d8d8"/>
<rect x="1549.500" y="355" width="10" height="8" fill="#d8d8d8"/><path d="M1551.500 355V352.500A3 3 0 0 1 1557.500 352.500V355" fill="none" stroke="#d8d8d8" stroke-width="1.400"/><circle cx="1554.500" cy="358.500" r="1.200" fill="#535353"/>
<text x="1584" y="359" textLength="16" lengthAdjust="spacingAndGlyphs" style="fill:#a8a8a8">Fill:</text>
<rect x="1603.5" y="346.500" width="50" height="17" rx="2" fill="#484848" stroke="#6a6a6a"/><path d="M1640.5 347V363" stroke="#6a6a6a"/>
<text x="1607" y="360" textLength="25" lengthAdjust="spacingAndGlyphs">100%</text><use href="#dn" x="1647" y="356"/>
<rect x="1423" y="370" width="237" height="5" fill="#474747"/>
<!-- rows -->
<rect x="1423" y="375" width="221" height="365" fill="#535353"/>
<rect x="1644" y="375" width="16" height="365" fill="#4b4b4b"/>
<rect x="1647" y="390" width="10" height="267" rx="5" fill="#686868"/>
<rect x="1454" y="712" width="190" height="28" fill="#6a6a6a"/>
<path d="M1453.500 375V740" stroke="#424242"/>
<path d="M1423 403.500H1644M1423 428.500H1644M1423 453.500H1644M1423 478.500H1644M1423 503.500H1644M1423 528.500H1644M1423 553.500H1644M1423 578.500H1644M1423 603.500H1644M1423 628.500H1644M1423 656.500H1644M1423 684.500H1644M1423 712.500H1644M1423 740.500H1660" stroke="#424242"/>
<rect x="1432.500" y="384.500" width="11" height="11" fill="none" stroke="#424242"/>
<rect x="1473.500" y="381.500" width="31" height="18" fill="url(#chk)" stroke="#2a2a2a"/>
<rect x="1493" y="386" width="1" height="3" fill="#e8d060"/><rect x="1489" y="388" width="1" height="1" fill="#456"/><rect x="1497" y="388" width="1" height="1" fill="#222"/>
<text x="1513" y="394" textLength="35" lengthAdjust="spacingAndGlyphs">Layer 4</text>
<rect x="1617" y="390" width="10" height="8.500" fill="#d8d8d8"/><path d="M1619 390V387.500A3 3 0 0 1 1625 387.500V390" fill="none" stroke="#d8d8d8" stroke-width="1.400"/><circle cx="1622" cy="394" r="1.200" fill="#535353"/>
<use href="#eye" x="1438" y="417"/><use href="#eye" x="1438" y="442"/><use href="#eye" x="1438" y="467"/><use href="#eye" x="1438" y="492"/><use href="#eye" x="1438" y="517"/><use href="#eye" x="1438" y="542"/><use href="#eye" x="1438" y="567"/><use href="#eye" x="1438" y="592"/><use href="#eye" x="1438" y="617"/>
<use href="#eye" x="1438" y="643"/><use href="#eye" x="1438" y="671"/><use href="#eye" x="1438" y="699"/><use href="#eye" x="1438" y="727"/>
<use href="#chev" x="1476" y="416.500"/><use href="#chev" x="1476" y="441.500"/><use href="#chev" x="1476" y="466.500"/><use href="#chev" x="1476" y="491.500"/><use href="#chev" x="1476" y="516.500"/><use href="#chev" x="1476" y="541.500"/><use href="#chev" x="1476" y="566.500"/><use href="#chev" x="1476" y="591.500"/><use href="#chev" x="1476" y="616.500"/>
<use href="#clap" x="1485" y="411"/><use href="#clap" x="1485" y="436"/><use href="#clap" x="1485" y="461"/><use href="#clap" x="1485" y="486"/><use href="#clap" x="1485" y="511"/><use href="#clap" x="1485" y="536"/><use href="#clap" x="1485" y="561"/><use href="#clap" x="1485" y="586"/><use href="#clap" x="1485" y="611"/>
<g><text x="1510" y="420" textLength="24" lengthAdjust="spacingAndGlyphs">Anim</text><text x="1510" y="445" textLength="24" lengthAdjust="spacingAndGlyphs">Anim</text><text x="1510" y="470" textLength="24" lengthAdjust="spacingAndGlyphs">Anim</text><text x="1510" y="495" textLength="24" lengthAdjust="spacingAndGlyphs">Anim</text><text x="1510" y="520" textLength="24" lengthAdjust="spacingAndGlyphs">Anim</text><text x="1510" y="545" textLength="24" lengthAdjust="spacingAndGlyphs">Anim</text><text x="1510" y="570" textLength="24" lengthAdjust="spacingAndGlyphs">Anim</text><text x="1510" y="595" textLength="24" lengthAdjust="spacingAndGlyphs">Anim</text><text x="1510" y="620" textLength="24" lengthAdjust="spacingAndGlyphs">Anim</text></g>
<rect x="1473.500" y="634.500" width="31" height="18" fill="url(#chk)" stroke="#2a2a2a"/>
<rect x="1473.500" y="662.500" width="31" height="18" fill="url(#chk)" stroke="#2a2a2a"/>
<rect x="1473.500" y="690.500" width="31" height="18" fill="url(#chk)" stroke="#2a2a2a"/>
<rect x="1473.500" y="718.500" width="31" height="18" fill="url(#chk)" stroke="#2a2a2a"/>
<rect x="1485" y="719" width="13" height="7" fill="#f5e3a8"/><rect x="1485" y="726" width="13" height="2" fill="#8da2bb"/>
<path d="M1471.500 722V716.500H1483M1496 716.500H1506.500V722M1506.500 733V738.500H1496M1483 738.500H1471.500V733" fill="none" stroke="#fff" stroke-width="1.200"/>
<text x="1513" y="647" textLength="35" lengthAdjust="spacingAndGlyphs">Layer 8</text>
<text x="1513" y="675" textLength="41" lengthAdjust="spacingAndGlyphs">Layer 27</text>
<text x="1513" y="703" textLength="41" lengthAdjust="spacingAndGlyphs">Layer 28</text>
<text x="1513" y="731" textLength="40" lengthAdjust="spacingAndGlyphs" style="fill:#e4e4e4">Layer 31</text>
<!-- footer -->
<rect x="1423" y="741" width="237" height="25" fill="#535353"/>
<rect x="1423" y="766" width="237" height="1" fill="#3a3a3a"/><rect x="1423" y="767" width="237" height="7" fill="#4a4a4a"/>
<path d="M1531 769V772M1533 769V772M1535 769V772M1537 769V772M1539 769V772M1541 769V772M1543 769V772M1545 769V772M1547 769V772M1549 769V772" stroke="#6a6a6a"/>
<path d="M1461 749.500H1458A3.500 3.500 0 0 0 1458 756.500H1461M1467 749.500H1470A3.500 3.500 0 0 1 1470 756.500H1467M1459 753H1469" fill="none" stroke="#8c8c8c" stroke-width="1.200"/>
<text x="1485" y="759" font-size="14" font-style="italic" style="font-family:'Liberation Serif',serif;fill:#d8d8d8">fx</text><path d="M1496 760H1500L1498 762Z" fill="#d8d8d8"/>
<rect x="1511" y="748" width="13" height="10" fill="#d8d8d8"/><ellipse cx="1517.500" cy="753" rx="3.500" ry="3.200" fill="#333"/>
<circle cx="1545" cy="753" r="5.500" fill="#535353" stroke="#d8d8d8"/><path d="M1549 749.500A5.500 5.500 0 0 1 1541.500 757Z" fill="#d8d8d8"/><path d="M1550 760H1554L1552 762Z" fill="#d8d8d8"/>
<path d="M1566 747.500H1572L1574 749.500H1578V758H1566Z" fill="#d8d8d8"/>
<path d="M1594 749H1604V758H1599L1594 753.500Z" fill="none" stroke="#d8d8d8" stroke-width="1.200"/><path d="M1594 753.500H1599V758" fill="none" stroke="#d8d8d8"/>
<path d="M1621 750H1630M1623.500 750V748H1627.500V750M1622 751.500V759H1629V751.500M1624.300 752.500V758M1626.700 752.500V758" fill="none" stroke="#d8d8d8" stroke-width="1.100"/>
</g>
</svg>
</body></html>
